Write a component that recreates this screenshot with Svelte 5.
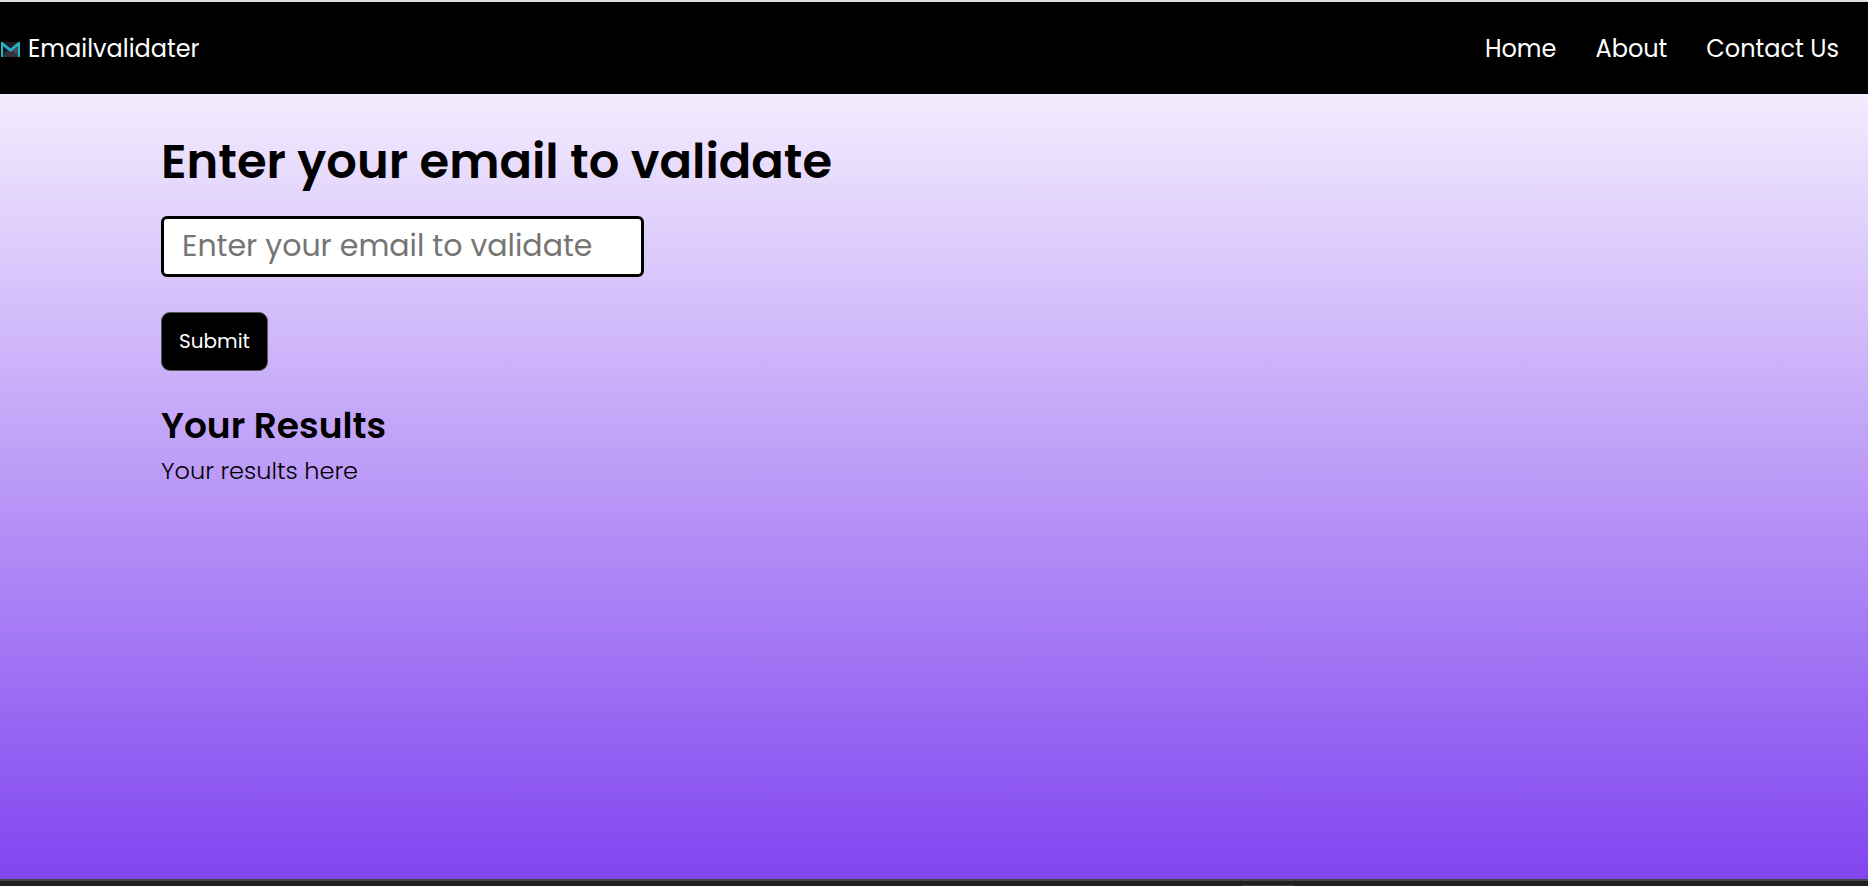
<script>
  let email = $state('');
  let result = $state('Your results here');
  const links = ['Home', 'About', 'Contact Us'];

  function submit(event) {
    event.preventDefault();
    if (email) result = email;
  }
</script>

<div class="page">
  <header>
    <a class="brand" href="#home">
      <svg viewBox="0 0 20 16" aria-hidden="true">
        <rect x="1" y="1" width="19" height="15" fill="#1d1c28" />
        <path d="M1 16L8 9L10.500 11L13 9L20 16Z" fill="#34333f" />
        <path d="M12 10L19 4V15Z" fill="#4b4955" />
        <path d="M1 1H2.500L10.500 7.500L18.500 1H20V16H18V5L10.500 11L3 5V16H1Z" fill="#24b4c1" />
      </svg>
      <span>Emailvalidater</span>
    </a>
    <nav>
      {#each links as link}
        <a href="#{link.toLowerCase().replace(' ', '-')}">{link}</a>
      {/each}
    </nav>
  </header>
  <main>
    <h1><label for="email">Enter your email to validate</label></h1>
    <form onsubmit={submit}>
      <input id="email" type="text" placeholder="Enter your email to validate" bind:value={email} />
      <button type="submit">Submit</button>
    </form>
    <section>
      <h2>Your Results</h2>
      <p>{result}</p>
    </section>
  </main>
  <footer><span></span></footer>
</div>

<style>
  :global(body) {
    margin: 0;
  }
  .page {
    box-sizing: border-box;
    min-height: 100vh;
    display: flex;
    flex-direction: column;
    border-top: 2px solid #dfe3e0;
    font-family: Poppins, Inter, sans-serif;
    color: #000;
  }
  header {
    display: flex;
    justify-content: space-between;
    align-items: center;
    padding: 29px 29px 27px 0;
    background: #000;
    font-size: 24px;
    line-height: 36px;
  }
  a {
    color: #fff;
    text-decoration: none;
  }
  .brand {
    display: flex;
    align-items: center;
    gap: 8px;
  }
  svg {
    width: 20px;
    height: 16px;
  }
  nav {
    display: flex;
    gap: 39px;
  }
  main {
    flex: 1;
    padding: 32px 161px;
    background: linear-gradient(#f3ecfe, #8145f0);
  }
  h1 {
    margin: 0 0 18px;
    font-size: 48px;
    line-height: 72px;
    font-weight: 600;
  }
  form {
    display: flex;
    flex-direction: column;
    align-items: flex-start;
    gap: 35px;
  }
  input {
    box-sizing: border-box;
    width: 483px;
    max-width: 100%;
    height: 61px;
    padding: 0 18px 2px;
    border: 3px solid #000;
    border-radius: 6px;
    background: #fff;
    font: inherit;
    font-size: 30px;
  }
  input::placeholder {
    color: #757575;
  }
  button {
    padding: 16px 17px;
    border: 1px solid #555;
    border-radius: 9px;
    background: #000;
    color: #fff;
    font: inherit;
    font-size: 20px;
    line-height: 25px;
  }
  section {
    padding-top: 28px;
  }
  h2 {
    margin: 0;
    font-size: 36px;
    line-height: 54px;
    font-weight: 600;
  }
  p {
    margin: 0;
    font-size: 24px;
    line-height: 36px;
    font-weight: 300;
  }
  footer {
    display: flex;
    align-items: flex-end;
    height: 5px;
    border-top: 2px solid #444;
    background: #202020;
  }
  footer span {
    width: 52px;
    height: 1px;
    margin-left: 66.5%;
    background: #3c3c3c;
  }
</style>
